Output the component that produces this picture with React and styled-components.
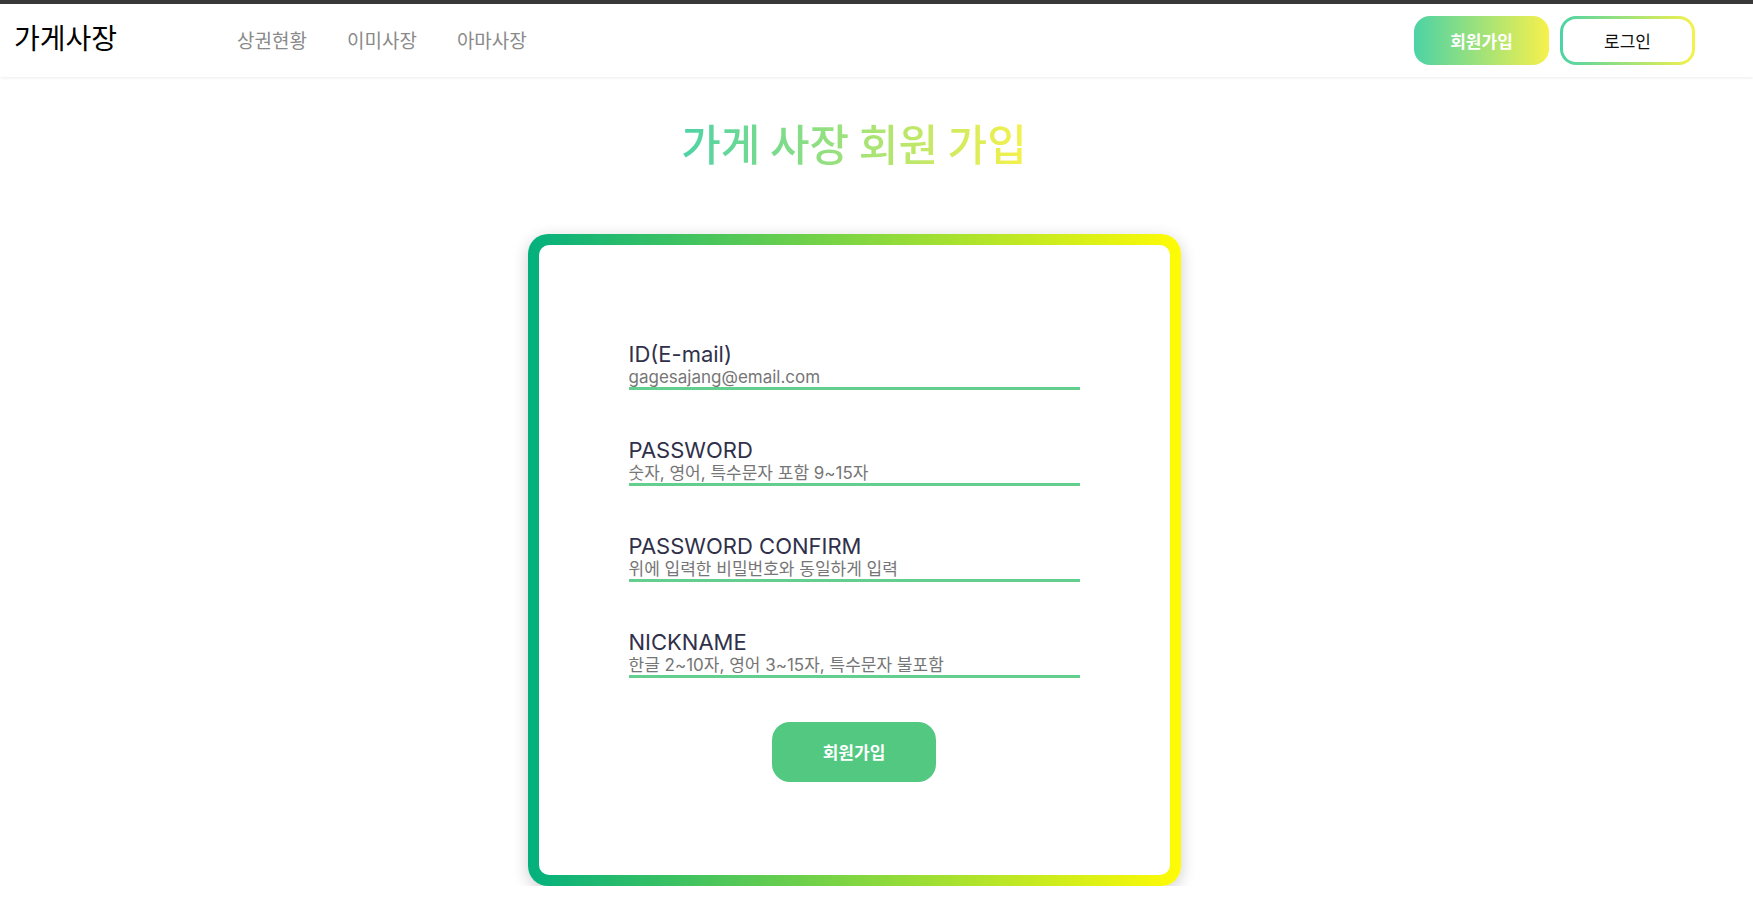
import React from 'react'
import styled, {createGlobalStyle} from 'styled-components'

const GlobalStyle = createGlobalStyle`
  * { box-sizing: border-box; }
  body {
    margin: 0;
    background: #fff;
    font-family: "Inter", "Noto Sans CJK KR", sans-serif;
  }
`

const HeaderWrapper = styled.header`
  display: flex;
  align-items: center;
  height: 77px;
  border-top: 4px solid #383838;
  padding: 0 58px 0 14px;
  background: #fff;
  box-shadow: 0 1px 3px rgba(0, 0, 0, 0.08);
`

const Logo = styled.a`
  font-family: "Noto Sans CJK KR", sans-serif;
  font-size: 28px;
  color: #000;
  text-decoration: none;
  margin-top: -7px;
`

const Nav = styled.nav`
  display: flex;
  gap: 40px;
  margin-left: 120px;
  margin-top: -3px;
  flex: 1;
`

const NavItem = styled.a`
  font-family: "Noto Sans CJK KR", sans-serif;
  font-size: 19px;
  color: #8a8a8a;
  text-decoration: none;
`

const Actions = styled.div`
  display: flex;
  gap: 11px;
  margin-top: -1px;
`

const gradient = 'linear-gradient(90deg, #4cd3a5, #f6f14c)'

const SignupButton = styled.button`
  width: 135px;
  height: 49px;
  border: none;
  border-radius: 16px;
  background: ${gradient};
  color: #fff;
  font-family: "Noto Sans CJK KR", sans-serif;
  font-size: 17px;
  font-weight: 700;
`

const LoginButton = styled.button`
  width: 135px;
  height: 49px;
  border: 3px solid transparent;
  border-radius: 16px;
  background: linear-gradient(#fff, #fff) padding-box, ${gradient} border-box;
  color: #111;
  font-family: "Noto Sans CJK KR", sans-serif;
  font-size: 17px;
`

const Main = styled.main`
  display: flex;
  flex-direction: column;
  align-items: center;
  padding-right: 45px;
`

const Title = styled.h1`
  margin: 40px 0 65px;
  font-family: "Noto Sans CJK KR", sans-serif;
  font-size: 43px;
  font-weight: 500;
  line-height: 1.2;
  background: ${gradient};
  -webkit-background-clip: text;
  background-clip: text;
  color: transparent;
`

const CardFrame = styled.div`
  padding: 11px;
  border-radius: 20px;
  background: linear-gradient(90deg, #03b07d, #fffb05);
  box-shadow: 0 4px 16px rgba(0, 0, 0, 0.2);
`

const Card = styled.form`
  display: flex;
  flex-direction: column;
  align-items: center;
  width: 631px;
  padding: 96px 90px 93px;
  border-radius: 10px;
  background: #fff;
`

const Fields = styled.div`
  display: flex;
  flex-direction: column;
  gap: 47px;
  width: 100%;
`

const Field = styled.label`
  display: flex;
  flex-direction: column;
`

const Label = styled.span`
  font-size: 22px;
  line-height: 26px;
  color: #30304a;
`

const Input = styled.input`
  width: 100%;
  height: 23px;
  padding: 0;
  border: none;
  border-bottom: 3px solid #62cf8e;
  outline: none;
  font-family: "Inter", "Noto Sans CJK KR", sans-serif;
  font-size: 17px;
  line-height: 20px;
  color: #333;
  &::placeholder {
    color: #767676;
  }
`

const SubmitButton = styled.button`
  margin-top: 44px;
  width: 164px;
  height: 60px;
  border: none;
  border-radius: 18px;
  background: #52c881;
  color: #fff;
  font-family: "Noto Sans CJK KR", sans-serif;
  font-size: 17px;
  font-weight: 700;
`

const fields = [
  {label: 'ID(E-mail)', placeholder: 'gagesajang@email.com', type: 'email'},
  {label: 'PASSWORD', placeholder: '숫자, 영어, 특수문자 포함 9~15자', type: 'password'},
  {label: 'PASSWORD CONFIRM', placeholder: '위에 입력한 비밀번호와 동일하게 입력', type: 'password'},
  {label: 'NICKNAME', placeholder: '한글 2~10자, 영어 3~15자, 특수문자 불포함', type: 'text'},
]

export default function App() {
  return (
    <>
      <GlobalStyle />
      <HeaderWrapper>
        <Logo href='#'>가게사장</Logo>
        <Nav>
          <NavItem href='#'>상권현황</NavItem>
          <NavItem href='#'>이미사장</NavItem>
          <NavItem href='#'>아마사장</NavItem>
        </Nav>
        <Actions>
          <SignupButton>회원가입</SignupButton>
          <LoginButton>로그인</LoginButton>
        </Actions>
      </HeaderWrapper>
      <Main>
        <Title>가게 사장 회원 가입</Title>
        <CardFrame>
          <Card onSubmit={e => e.preventDefault()}>
            <Fields>
              {fields.map(f => (
                <Field key={f.label}>
                  <Label>{f.label}</Label>
                  <Input type={f.type} placeholder={f.placeholder} />
                </Field>
              ))}
            </Fields>
            <SubmitButton type='submit'>회원가입</SubmitButton>
          </Card>
        </CardFrame>
      </Main>
    </>
  )
}
